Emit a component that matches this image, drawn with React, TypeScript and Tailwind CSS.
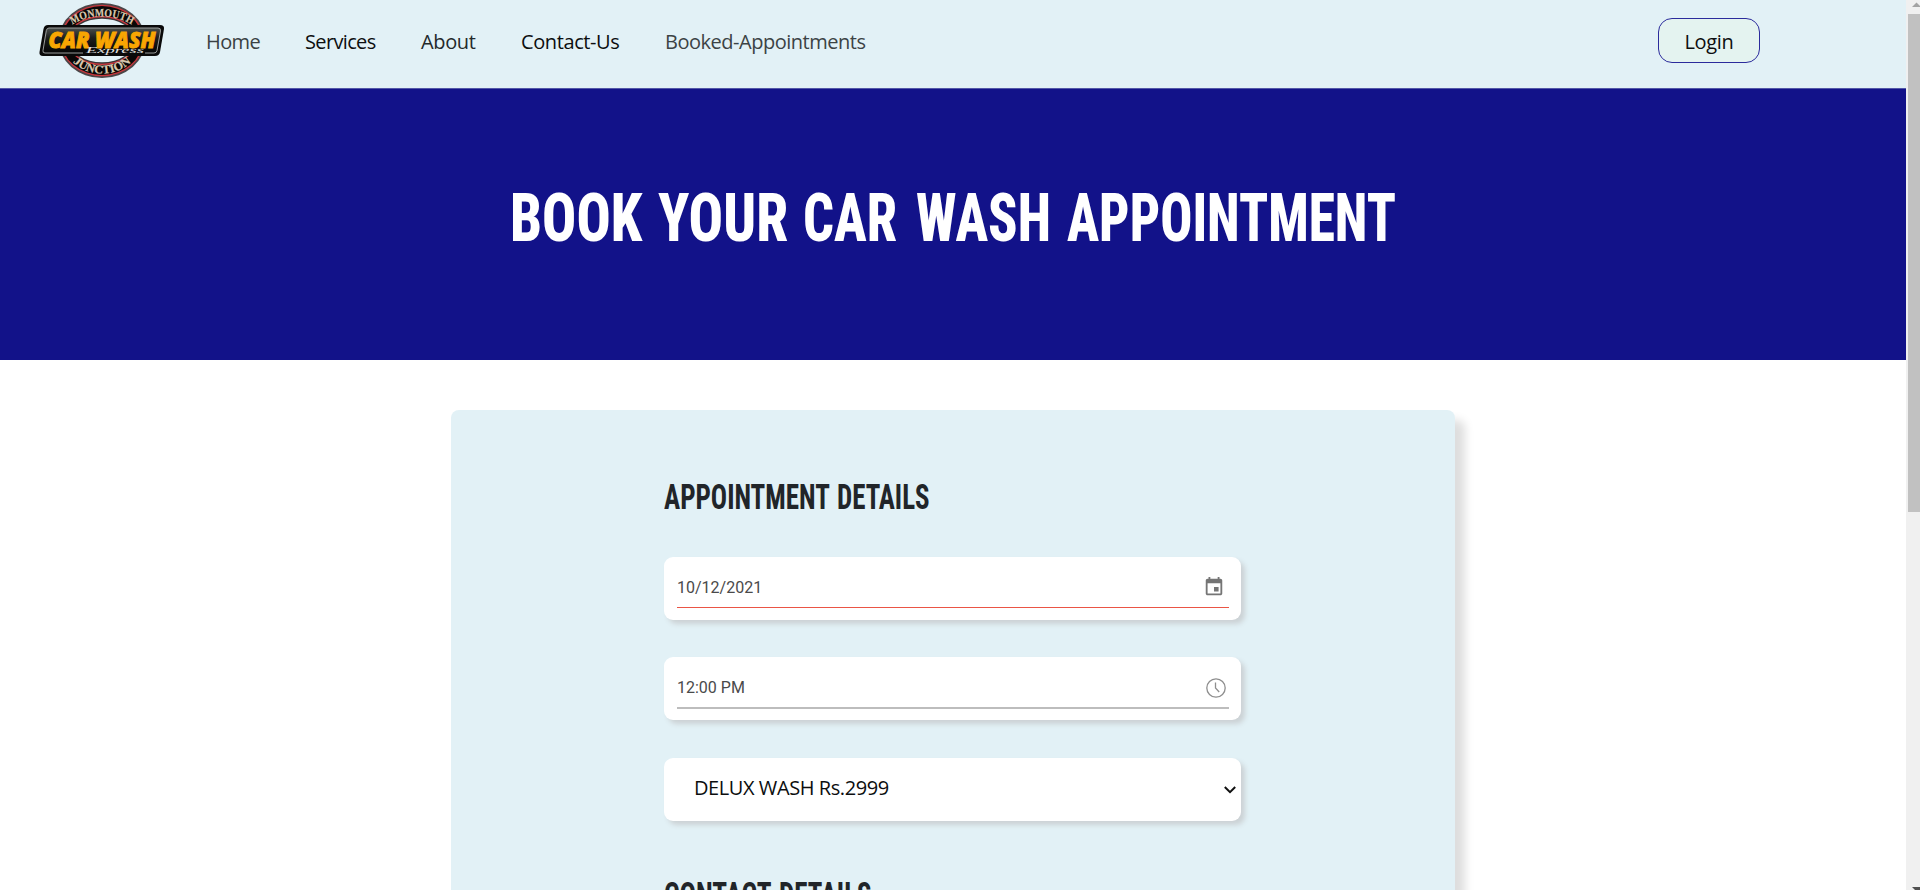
import React from "react";

const links = [
  { label: "Home", cls: "w-[99px] text-[#3a4143] tracking-[-0.6px]" },
  { label: "Services", cls: "w-[116px] text-[#0c0e0f] tracking-[-0.65px]" },
  { label: "About", cls: "w-[100px] text-[#24292b] tracking-[-0.35px]" },
  { label: "Contact-Us", cls: "w-[144px] text-[#0c0e0f] tracking-[-0.4px]" },
  { label: "Booked-Appointments", cls: "w-[220px] text-[#3c4345] tracking-[-0.48px]" },
];

function Logo() {
  return (
    <svg className="block h-[80px] w-[128px]" viewBox="38 0 128 80">
      <defs>
        <path id="arcTop" d="M 62 41.500 A 40 25 0 0 1 142 41.500" />
        <path id="arcBottom" d="M 63 40 A 39 33.5 0 0 0 141 40" />
        <linearGradient id="plate" x1="0" y1="0" x2="0" y2="1">
          <stop offset="0" stopColor="#4a4f4c" />
          <stop offset="0.4" stopColor="#1c1e1d" />
          <stop offset="1" stopColor="#050505" />
        </linearGradient>
      </defs>
      <ellipse cx="102" cy="40.5" rx="43.5" ry="37.5" fill="#4b4648" />
      <ellipse cx="102" cy="40.5" rx="41.8" ry="35.8" fill="#c8363c" />
      <ellipse cx="102" cy="40.5" rx="40.4" ry="34.4" fill="#0a0808" />
      <ellipse cx="102" cy="40.5" rx="35" ry="24.5" fill="#d03a40" />
      <ellipse cx="102" cy="40.5" rx="33.5" ry="23.2" fill="#3a3637" />
      <ellipse cx="102" cy="40.5" rx="32" ry="21.8" fill="#e3f1f6" />
      <text fontFamily="Liberation Serif, serif" fontWeight="700" fontSize="11.5" fill="#d9c9af" stroke="#d9c9af" strokeWidth="0.2">
        <textPath href="#arcTop" startOffset="50%" textAnchor="middle" textLength="62" lengthAdjust="spacingAndGlyphs">MONMOUTH</textPath>
      </text>
      <text fontFamily="Liberation Serif, serif" fontWeight="700" fontSize="12" fill="#d9c9af" stroke="#d9c9af" strokeWidth="0.2">
        <textPath href="#arcBottom" startOffset="50%" textAnchor="middle" textLength="64" lengthAdjust="spacingAndGlyphs">JUNCTION</textPath>
      </text>
      <path d="M48 25 H160 Q164.500 25 164 29 L160 52 Q159.300 56 155 56 H43 Q39 56 39.500 52 L43.500 29 Q44.300 25 48 25Z" fill="#0a0a0a" />
      <path d="M49 28 H158 Q161 28 160.500 31 L157 50.500 Q156.500 53 154 53 H45 Q42.500 53 43 50.500 L46.300 30.500 Q46.800 28 49 28Z" fill="url(#plate)" stroke="#a9adab" strokeWidth="0.9" />
      <text x="48.500" y="48.300" fontFamily="Open Sans, sans-serif" fontWeight="800" fontStyle="italic" fontSize="22.500" fill="#f9a602" stroke="#f9a602" strokeWidth="0.9" textLength="107" lengthAdjust="spacingAndGlyphs">CAR WASH</text>
      <rect x="83" y="51" width="62" height="3.500" fill="#0a0a0a" />
      <text x="86" y="53" fontFamily="Liberation Serif, serif" fontStyle="italic" fontSize="9" fill="#e2e2e2" textLength="58" lengthAdjust="spacingAndGlyphs">Express</text>
    </svg>
  );
}

function Field({ children, className }: { children: React.ReactNode; className: string }) {
  return (
    <div className={`w-[577px] rounded-[9px] bg-white shadow-[4px_4px_5px_#ccd2d5] ${className}`}>{children}</div>
  );
}

/* Headings are set word by word, each narrowed to its own column. */
function Words({ words }: { words: { t: string; box: string; scale: string }[] }) {
  return (
    <>
      {words.map((w) => (
        <span key={w.t} className={`block shrink-0 whitespace-nowrap ${w.box}`}>
          <span className={`inline-block origin-left ${w.scale}`}>{w.t}</span>
        </span>
      ))}
    </>
  );
}

export default function App() {
  return (
    <div className="flex h-[890px] w-full overflow-hidden bg-white font-['Open_Sans',sans-serif]">
      <div className="flex h-full w-[1906px] shrink-0 flex-col overflow-hidden">
        <header className="flex h-[88px] shrink-0 items-start bg-[#e2f1f6] pl-[38px]">
          <Logo />
          <nav className="ml-[40px] mt-[28px] flex text-[20px] leading-[28px]">
            {links.map((l) => (
              <a key={l.label} className={`whitespace-nowrap ${l.cls}`}>{l.label}</a>
            ))}
          </nav>
          <button className="ml-auto mr-[146px] mt-[18px] h-[45px] w-[102px] rounded-[14px] border border-[#2b2b9c] bg-[#e4f3f0] pt-[2px] text-[20px] leading-[41px] tracking-[-0.3px] text-[#0c0e0f]">
            Login
          </button>
        </header>
        <section className="flex h-[272px] shrink-0 border-t border-[#5257a8] bg-[#121289] pl-[510px] pt-[88px]">
          <h1 className="flex font-['Roboto',sans-serif] text-[67.500px] font-extrabold leading-[81px] text-white [font-stretch:75%]">
            <Words
              words={[
                { t: "BOOK", box: "w-[148px]", scale: "scale-x-[0.842]" },
                { t: "YOUR", box: "w-[145px]", scale: "scale-x-[0.850]" },
                { t: "CAR", box: "w-[113px]", scale: "scale-x-[0.806]" },
                { t: "WASH", box: "w-[151px]", scale: "scale-x-[0.805]" },
                { t: "APPOINTMENT", box: "w-[330px]", scale: "scale-x-[0.791]" },
              ]}
            />
          </h1>
        </section>
        <main className="flex flex-1 justify-start pl-[451px] pt-[50px]">
          <div className="h-[600px] w-[1004px] shrink-0 rounded-[8px] bg-[#e2f1f6] pl-[213px] pt-[68px] shadow-[10px_10px_10px_#dedede]">
            <h2 className="flex h-[40px] font-['Roboto',sans-serif] text-[35px] font-bold leading-[40px] text-[#212529] [font-stretch:75%]">
              <Words
                words={[
                  { t: "APPOINTMENT", box: "w-[172.500px]", scale: "scale-x-[0.772]" },
                  { t: "DETAILS", box: "w-[95px]", scale: "scale-x-[0.770]" },
                ]}
              />
            </h2>
            <Field className="mt-[39px] h-[63px] pl-[13px] pr-[12px] pt-[14px]">
              <div className="flex h-[37px] items-start justify-between border-b border-[#ea5545] font-['Roboto',sans-serif] text-[16px] text-[#4a4a4a]">
                <span className="leading-[33px]">10/12/2021</span>
                <svg className="mr-[4px] mt-[5px] h-[22px] w-[22px]" viewBox="0 0 24 24" fill="#757575">
                  <path d="M17 12h-5v5h5v-5zM16 1v2H8V1H6v2H5c-1.110 0-1.990.9-1.990 2L3 19c0 1.100.89 2 2 2h14c1.100 0 2-.9 2-2V5c0-1.100-.9-2-2-2h-1V1h-2zm3 18H5V8h14v11z" />
                </svg>
              </div>
            </Field>
            <Field className="mt-[37px] h-[63px] pl-[13px] pr-[12px] pt-[14px]">
              <div className="flex h-[38px] items-start justify-between border-b-2 border-[#bdbdbd] font-['Roboto',sans-serif] text-[16px] text-[#4a4a4a]">
                <span className="leading-[34px]">12:00 PM</span>
                <svg className="mr-[3px] mt-[7px] h-[20px] w-[20px]" viewBox="0 0 20 20" fill="none" stroke="#8e8e8e" strokeWidth="1.300">
                  <circle cx="10" cy="10" r="9.200" />
                  <path d="M9.500 4.500V10L13.200 14" />
                </svg>
              </div>
            </Field>
            <Field className="mt-[38px] flex h-[63px] items-start justify-between pl-[30px] pr-[5px] pt-[16px] text-[20px] leading-[28px] text-[#0c0e0f]">
              <span className="tracking-[-0.42px]">DELUX WASH Rs.2999</span>
              <svg className="mt-[12px] h-[8px] w-[12px]" viewBox="0 0 12 8" fill="none" stroke="#101010" strokeWidth="2">
                <path d="M0.800 1L6 6.200L11.200 1" />
              </svg>
            </Field>
            <h2 className="mt-[55px] flex h-[40px] font-['Roboto',sans-serif] text-[35px] font-bold leading-[40px] text-[#212529] [font-stretch:75%]">
              <Words
                words={[
                  { t: "CONTACT", box: "w-[114.500px]", scale: "scale-x-[0.780]" },
                  { t: "DETAILS", box: "w-[95px]", scale: "scale-x-[0.770]" },
                ]}
              />
            </h2>
          </div>
        </main>
      </div>
      <div className="flex h-full w-[14px] shrink-0 flex-col bg-[#f0f0f0]">
        <svg className="block h-[14px] w-[14px] shrink-0" viewBox="0 0 14 14" fill="#a3a3a3">
          <path d="M6 7L10.500 2.500L14 6V7Z" />
        </svg>
        <div className="ml-[2px] h-[498px] w-[12px] shrink-0 bg-[#c1c1c1]" />
        <svg className="mt-auto block h-[4px] w-[14px] shrink-0" viewBox="0 0 14 4" fill="#505050">
          <path d="M6 1H14V4H9Z" />
        </svg>
      </div>
    </div>
  );
}
